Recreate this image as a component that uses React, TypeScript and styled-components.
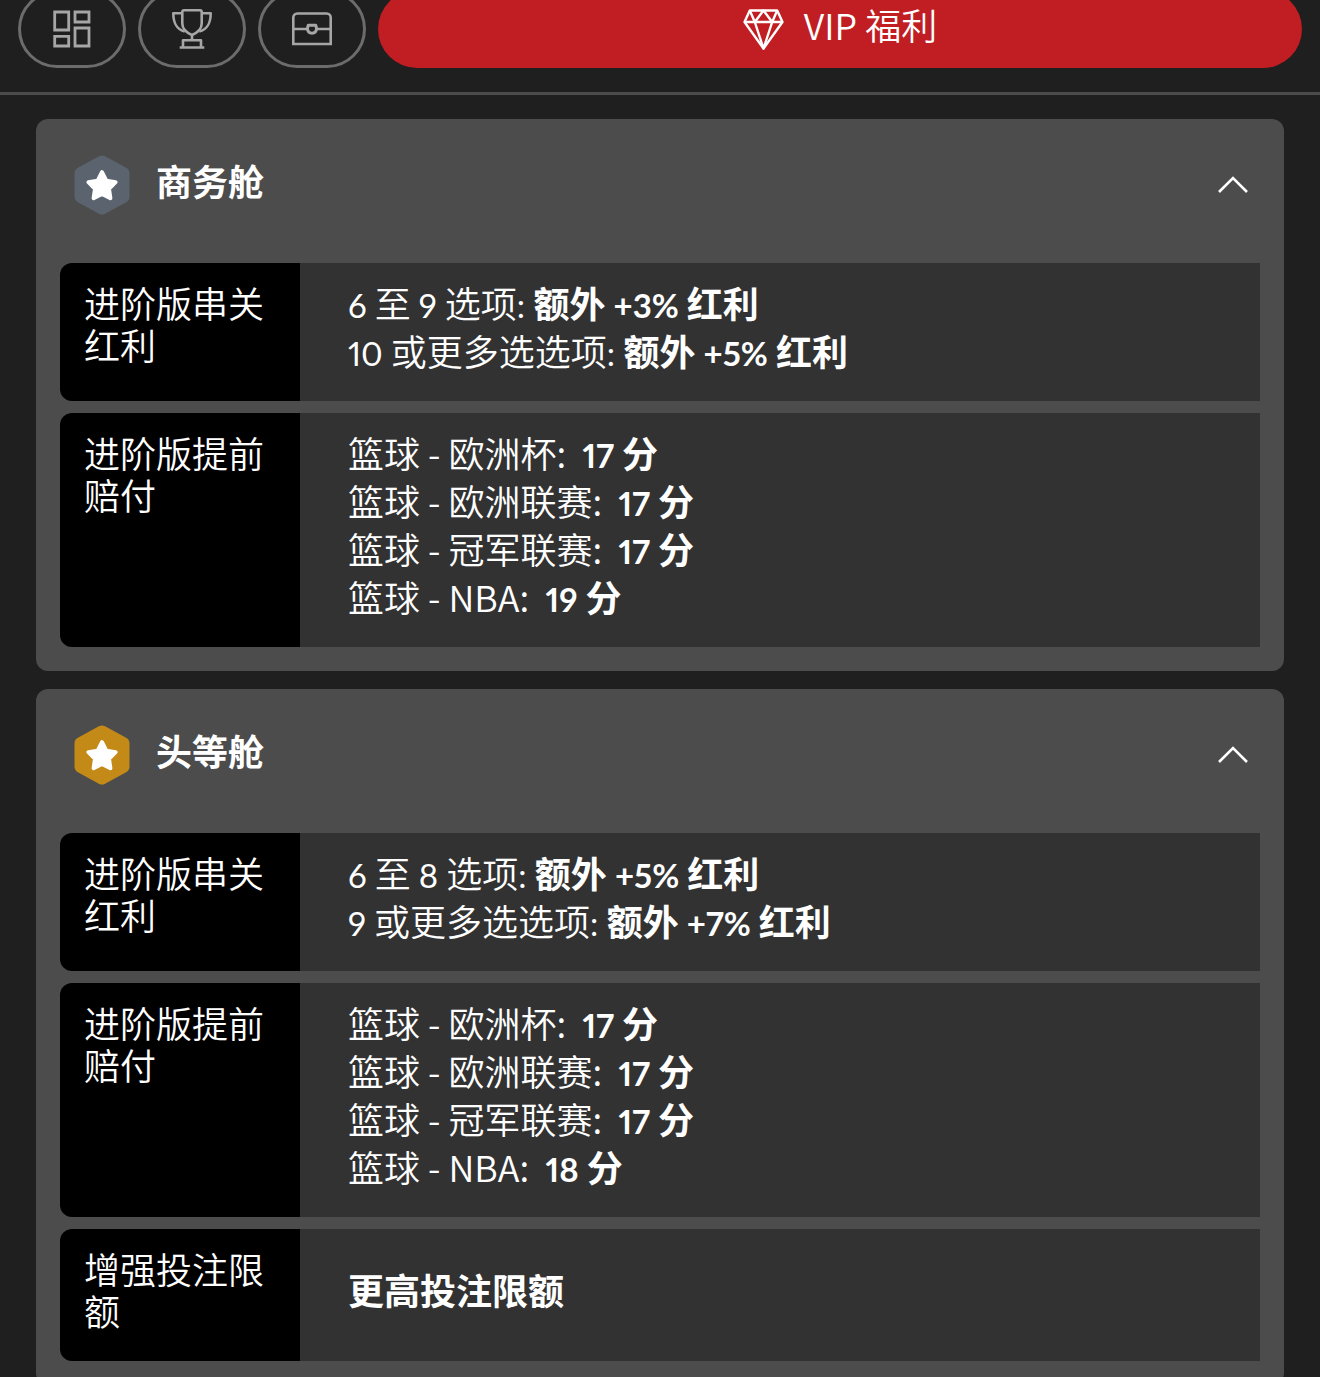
import React, { useState } from 'react';
import type { ReactNode } from 'react';
import styled, { createGlobalStyle } from 'styled-components';

const GlobalStyle = createGlobalStyle`
  *, *::before, *::after { box-sizing: border-box; }
  body {
    margin: 0;
    background: #1f1f1f;
    color: #fff;
    font-family: "Noto Sans CJK SC", sans-serif;
    font-size: 36px;
    font-weight: 350;
    line-height: 48px;
  }
  button { font: inherit; color: inherit; cursor: pointer; }
`;

const App = styled.div`
  overflow: hidden;
`;

const Toolbar = styled.nav`
  display: flex;
  gap: 12px;
  margin-top: -10px;
  padding: 0 18px 24px;
  border-bottom: 3px solid #4b4b4b;
`;

const IconTab = styled.button`
  display: flex;
  align-items: center;
  justify-content: center;
  flex: none;
  width: 108px;
  height: 78px;
  padding: 0;
  border: 3px solid #6c6c6c;
  border-radius: 39px;
  background: transparent;
  color: #a6a6a6;
`;

const ActiveTab = styled.button`
  display: flex;
  align-items: center;
  justify-content: center;
  gap: 20px;
  flex: 1;
  height: 78px;
  padding: 0;
  border: 0;
  border-radius: 39px;
  background: #c01e22;
`;

const TabLabel = styled.span`
  padding-bottom: 10px;
  line-height: 42px;
`;

const Glyph = styled.svg`
  display: block;
  flex: none;
  fill: none;
  stroke: currentColor;
`;

const Levels = styled.main`
  display: flex;
  flex-direction: column;
  gap: 18px;
  padding: 24px 36px;
`;

const Card = styled.section`
  border-radius: 12px;
  background: #4c4c4c;
`;

const CardHeading = styled.h2`
  margin: 0;
  font-size: 36px;
`;

const CardToggle = styled.button`
  display: flex;
  align-items: center;
  gap: 24px;
  width: 100%;
  padding: 36px;
  border: 0;
  background: transparent;
  text-align: left;
`;

const CardTitle = styled.span`
  flex: 1;
  padding-bottom: 10px;
  font-weight: 700;
`;

const Chevron = styled(Glyph)<{ $open: boolean }>`
  transform: ${({ $open }) => ($open ? 'none' : 'rotate(180deg)')};
`;

const Benefits = styled.dl`
  display: flex;
  flex-direction: column;
  gap: 12px;
  margin: 0;
  padding: 12px 24px 24px;
`;

const BenefitRow = styled.div`
  display: flex;
`;

const BenefitName = styled.dt`
  flex: none;
  width: 240px;
  padding: 18px 24px 30px;
  border-radius: 12px 0 0 12px;
  background: #000;
  line-height: 42px;
`;

const BenefitValue = styled.dd`
  display: flex;
  flex: 1;
  flex-direction: column;
  justify-content: center;
  margin: 0;
  padding: 15px 48px 27px;
  background: #323232;
`;

const Line = styled.div`
  b { font-weight: 700; }
`;

const Digits = styled.span`
  font-family: Lato, sans-serif;
  font-feature-settings: "pnum";
  font-size: 33px;
  font-weight: 400;
  line-height: 1;

  b & { font-weight: 700; }
`;

const GridIcon = () => (
  <Glyph width="40" height="40" viewBox="0 0 40 40" strokeWidth="2.8" aria-hidden="true">
    <path d="M2.7 3h14v18h-14zM23 3h14v10H23zM2.7 27.3h14v9.7h-14zM23 19h14v18H23z" />
  </Glyph>
);

const TrophyIcon = () => (
  <Glyph width="40" height="40" viewBox="0 0 40 40" strokeWidth="2.6" strokeLinejoin="round" aria-hidden="true">
    <path d="M12 1.3h16c1 0 1.7.7 1.7 1.7v11.5c0 5-3.4 8.8-9.7 11.5-6.3-2.7-9.7-6.5-9.7-11.5V3c0-1 .7-1.7 1.7-1.7z" />
    <path d="M10.3 4.3h-9c0 9 3.6 16.7 11.4 18.2M29.7 4.3h9c0 9-3.6 16.7-11.4 18.2" />
    <path d="M20 26v5M11 38.5v-7.300h18v7.300M7.700 38.500h24.600" />
  </Glyph>
);

const ChestIcon = () => (
  <Glyph width="40" height="40" viewBox="0 0 40 40" strokeWidth="2.6" aria-hidden="true">
    <path d="M1.300 35V8.500a4 4 0 0 1 4-4h29.400a4 4 0 0 1 4 4V35z" />
    <path d="M1.300 20h14M24.700 20h14" />
    <path strokeWidth="3" strokeLinejoin="round" d="M16.200 16.300h7.600l.8 3.400c-.3 2.900-2.100 4.500-4.600 4.500s-4.300-1.600-4.600-4.500z" />
  </Glyph>
);

const DiamondIcon = () => (
  <Glyph width="41" height="41" viewBox="0 0 41 41" strokeWidth="2.4" strokeLinejoin="round" aria-hidden="true">
    <path d="M6.800 1.500h27.400L39.500 13 20.500 39.500 1.500 13z" />
    <path d="M1.500 13h38M6.800 1.500 11.800 13l8.700-11.500L29.200 13l5-11.500M11.800 13l8.700 26.500L29.200 13" />
  </Glyph>
);

const LevelBadge = ({ color }: { color: string }) => (
  <Glyph width="60" height="60" viewBox="0 0 60 60" strokeLinejoin="round" aria-hidden="true">
    <path
      d="M30 7 51 18.500v23L30 53 9 41.500v-23z"
      fill={color}
      stroke={color}
      strokeWidth="13"
    />
    <path
      d="m30 17.200 4.300 8.400 9.300 1.500-6.600 6.700 1.400 9.400-8.400-4.200-8.400 4.200 1.400-9.400-6.600-6.700 9.300-1.500z"
      fill="#fff"
      stroke="#fff"
      strokeWidth="4"
    />
  </Glyph>
);

const Bonus = ({ percent }: { percent: number }) => (
  <b>额外<Digits> +{percent}% </Digits>红利</b>
);

const Points = ({ league, points }: { league: string; points: number }) => (
  <>篮球 - {league}: <Digits>&nbsp;</Digits><b><Digits>{points} </Digits>分</b></>
);

type Benefit = { name: string; lines: ReactNode[] };

const payoutLines = (nbaPoints: number) => [
  <Points league="欧洲杯" points={17} />,
  <Points league="欧洲联赛" points={17} />,
  <Points league="冠军联赛" points={17} />,
  <Points league="NBA" points={nbaPoints} />,
];

const tiers: { title: string; color: string; benefits: Benefit[] }[] = [
  {
    title: '商务舱',
    color: '#5b636e',
    benefits: [
      {
        name: '进阶版串关红利',
        lines: [
          <><Digits>6</Digits> 至 <Digits>9</Digits> 选项<Digits>: </Digits><Bonus percent={3} /></>,
          <><Digits>10</Digits> 或更多选选项<Digits>: </Digits><Bonus percent={5} /></>,
        ],
      },
      { name: '进阶版提前赔付', lines: payoutLines(19) },
    ],
  },
  {
    title: '头等舱',
    color: '#c48a17',
    benefits: [
      {
        name: '进阶版串关红利',
        lines: [
          <><Digits>6</Digits> 至 <Digits>8</Digits> 选项<Digits>: </Digits><Bonus percent={5} /></>,
          <><Digits>9</Digits> 或更多选选项<Digits>: </Digits><Bonus percent={7} /></>,
        ],
      },
      { name: '进阶版提前赔付', lines: payoutLines(18) },
      { name: '增强投注限额', lines: [<b>更高投注限额</b>] },
    ],
  },
];

function TierCard({ title, color, benefits }: (typeof tiers)[number]) {
  const [open, setOpen] = useState(true);
  return (
    <Card>
      <CardHeading>
        <CardToggle type="button" aria-expanded={open} onClick={() => setOpen(!open)}>
          <LevelBadge color={color} />
          <CardTitle>{title}</CardTitle>
          <Chevron $open={open} width="30" height="30" viewBox="0 0 30 30" strokeWidth="2.6" aria-hidden="true">
            <path d="m1 22 14-14 14 14" />
          </Chevron>
        </CardToggle>
      </CardHeading>
      {open && (
        <Benefits>
          {benefits.map(benefit => (
            <BenefitRow key={benefit.name}>
              <BenefitName>{benefit.name}</BenefitName>
              <BenefitValue>
                {benefit.lines.map((line, i) => <Line key={i}>{line}</Line>)}
              </BenefitValue>
            </BenefitRow>
          ))}
        </Benefits>
      )}
    </Card>
  );
}

export default function VipPage() {
  return (
    <App lang="zh-CN">
      <GlobalStyle />
      <Toolbar>
        <IconTab type="button"><GridIcon /></IconTab>
        <IconTab type="button"><TrophyIcon /></IconTab>
        <IconTab type="button"><ChestIcon /></IconTab>
        <ActiveTab type="button">
          <DiamondIcon />
          <TabLabel>VIP 福利</TabLabel>
        </ActiveTab>
      </Toolbar>
      <Levels>
        {tiers.map(tier => <TierCard key={tier.title} {...tier} />)}
      </Levels>
    </App>
  );
}
